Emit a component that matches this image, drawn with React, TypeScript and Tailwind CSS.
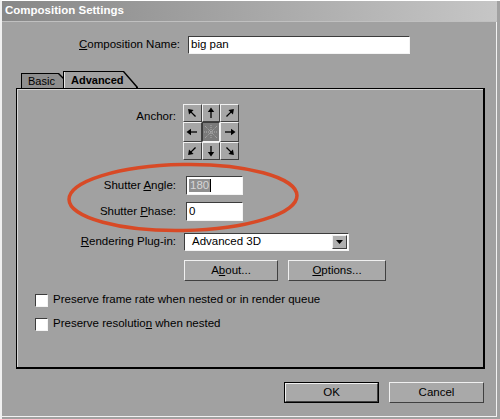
const sunken = "border border-t-[#3c3c3c] border-l-[#3c3c3c] border-b-[#f4f4f4] border-r-[#f4f4f4]";
const raised = "border border-t-[#f0f0f0] border-l-[#f0f0f0] border-b-[#404040] border-r-[#404040]";

function Arrow({ angle }: { angle: number }) {
  return (
    <svg width="12" height="12" viewBox="0 0 12 12">
      <g transform={`rotate(${angle} 6 6)`}>
        <line x1="6" y1="11" x2="6" y2="4" stroke="#000" strokeWidth="1.3" />
        <polygon points="6,0.5 2.8,5 9.2,5" fill="#000" />
      </g>
    </svg>
  );
}

function AnchorGrid() {
  const angles = [-45, 0, 45, -90, null, 90, -135, 180, 135];
  return (
    <div className="grid grid-cols-3 gap-0 w-[56px] h-[56px]">
      {angles.map((a, i) =>
        a === null ? (
          <div key={i} className={`${sunken} bg-[#7a7a7a] flex items-center justify-center`}>
            <svg width="14" height="14" viewBox="0 0 14 14">
              <g stroke="#b0b0b0" strokeWidth="1" strokeDasharray="1 1">
                <line x1="7" y1="0" x2="7" y2="14" />
                <line x1="0" y1="7" x2="14" y2="7" />
                <line x1="1" y1="1" x2="13" y2="13" />
                <line x1="13" y1="1" x2="1" y2="13" />
              </g>
            </svg>
          </div>
        ) : (
          <div key={i} className={`${raised} bg-[#a6a6a6] flex items-center justify-center`}>
            <Arrow angle={a} />
          </div>
        )
      )}
    </div>
  );
}

function Button({ children, isDefault, className }: { children: React.ReactNode; isDefault?: boolean; className: string }) {
  return (
    <div className={`${isDefault ? "border border-black" : ""} ${className}`}>
      <div className={`${raised} bg-[#a9a9a9] h-full flex items-center justify-center text-[11.5px]`}>{children}</div>
    </div>
  );
}

function Checkbox({ children }: { children: React.ReactNode }) {
  return (
    <div className="flex items-center h-[24px]">
      <div className={`${sunken} w-[13px] h-[13px] bg-white`} />
      <span className="ml-[5px] text-[11.5px]">{children}</span>
    </div>
  );
}

export default function App() {
  return (
    <div className="w-[500px] h-[419px] bg-[#a1a1a1] font-['Liberation_Sans',Arial,sans-serif] text-black overflow-hidden border-t border-t-white border-l-2 border-l-[#f0f0f0] shadow-[inset_-3px_-2px_0_#a1a1a1,inset_-4px_-3px_0_#f2f2f2] relative">
      {/* TITLE */}
      <div className="h-[21px] mr-[3px] bg-linear-to-r from-[#888888] to-[#c6c6c6] flex items-center pl-[3px] border-b border-b-[#c0c0c0]">
        <span className="text-white font-bold text-[11.5px]">Composition Settings</span>
      </div>

      {/* NAME */}
      <div className="flex items-center mt-[14px]">
        <span className="w-[178px] text-right text-[11.5px]">
          <u>C</u>omposition Name:
        </span>
        <div className={`${sunken} ml-[8px] w-[222px] h-[18px] bg-white flex items-center pl-[2px] text-[11.5px]`}>big pan</div>
      </div>

      {/* TABS */}
      <div className="flex items-end mt-[17px] ml-[19px] h-[17px] relative z-10">
        <div className="relative w-[44px] h-[15px] bg-black [clip-path:polygon(0_0,38px_0,44px_6px,44px_100%,0_100%)]">
          <div className="absolute left-px top-px w-[42px] h-[15px] bg-[#8e8e8e] [clip-path:polygon(0_0,36px_0,42px_6px,42px_100%,0_100%)] flex items-center pl-[6px] text-[11px]">
            Basic
          </div>
        </div>
        <div className="relative -ml-[2px] w-[75px] h-[17px] bg-black [clip-path:polygon(0_0,61px_0,75px_16px,75px_100%,0_100%)]">
          <div className="absolute left-px top-px w-[72px] h-[17px] bg-[#a1a1a1] [clip-path:polygon(0_0,59px_0,72px_15px,72px_100%,0_100%)] flex items-center pl-[7px] text-[11px] font-bold">
            Advanced
          </div>
          <div className="absolute left-px top-[1px] w-px h-[16px] bg-[#e6e6e6]" />
        </div>
      </div>

      {/* PANEL */}
      <div className="ml-[14px] w-[469px] h-[281px] border-t border-l border-t-black border-l-black border-r-2 border-b-2 border-r-black border-b-black relative">
        <div className="h-full border-t border-l border-t-[#d6d6d6] border-l-[#d6d6d6] flex flex-col">
          <div className="flex mt-[14px]">
            <span className="w-[158px] text-right text-[11.5px] mt-[4px]">Anchor:</span>
            <div className="ml-[7px]">
              <AnchorGrid />
            </div>
          </div>

          <div className="flex items-center mt-[16px]">
            <span className="w-[158px] text-right text-[11.5px]">
              Shutter <u>A</u>ngle:
            </span>
            <div className={`${sunken} ml-[10px] w-[57px] h-[19px] bg-white flex items-center pl-[2px] text-[11.5px]`}>
              <span className="bg-[#8f8f8f] text-[#d6d6d6] leading-[13px] px-px">180</span>
              <span className="w-px h-[13px] bg-black" />
            </div>
          </div>

          <div className="flex items-center mt-[7px]">
            <span className="w-[158px] text-right text-[11.5px]">
              Shutter <u>P</u>hase:
            </span>
            <div className={`${sunken} ml-[10px] w-[57px] h-[19px] bg-white flex items-center pl-[2px] text-[11.5px]`}>0</div>
          </div>

          <div className="flex items-center mt-[12px]">
            <span className="w-[158px] text-right text-[11.5px]">
              <u>R</u>endering Plug-in:
            </span>
            <div className={`${sunken} ml-[8px] w-[165px] h-[18px] bg-white flex items-center pl-[7px] text-[11.5px]`}>
              <span className="flex-1">Advanced 3D</span>
              <div className={`${raised} w-[15px] h-[14px] mr-px bg-[#b0b0b0] flex items-center justify-center`}>
                <svg width="7" height="4" viewBox="0 0 7 4">
                  <polygon points="0,0 7,0 3.5,4" fill="#000" />
                </svg>
              </div>
            </div>
          </div>

          <div className="flex mt-[9px] ml-[166px] gap-[10px]">
            <Button className="w-[94px] h-[21px]">
              <span>
                A<u>b</u>out...
              </span>
            </Button>
            <Button className="w-[98px] h-[21px]">
              <span>
                <u>O</u>ptions...
              </span>
            </Button>
          </div>

          <div className="ml-[17px] mt-[7px] flex flex-col">
            <Checkbox>Preserve frame rate when nested or in render queue</Checkbox>
            <Checkbox>
              Preserve resolutio<u>n</u> when nested
            </Checkbox>
          </div>
        </div>

        {/* highlight ellipse */}
        <svg className="absolute left-[48px] top-[70px]" width="250" height="80" viewBox="0 0 250 80">
          <ellipse cx="118" cy="38.5" rx="114" ry="33" fill="none" stroke="#d84a26" strokeWidth="3.5" transform="rotate(-1 118 38.5)" />
        </svg>
      </div>

      {/* FOOTER */}
      <div className="flex justify-end gap-[10px] mt-[13px] mr-[16px]">
        <Button isDefault className="w-[95px] h-[21px]">
          OK
        </Button>
        <Button className="w-[95px] h-[21px]">Cancel</Button>
      </div>
    </div>
  );
}
